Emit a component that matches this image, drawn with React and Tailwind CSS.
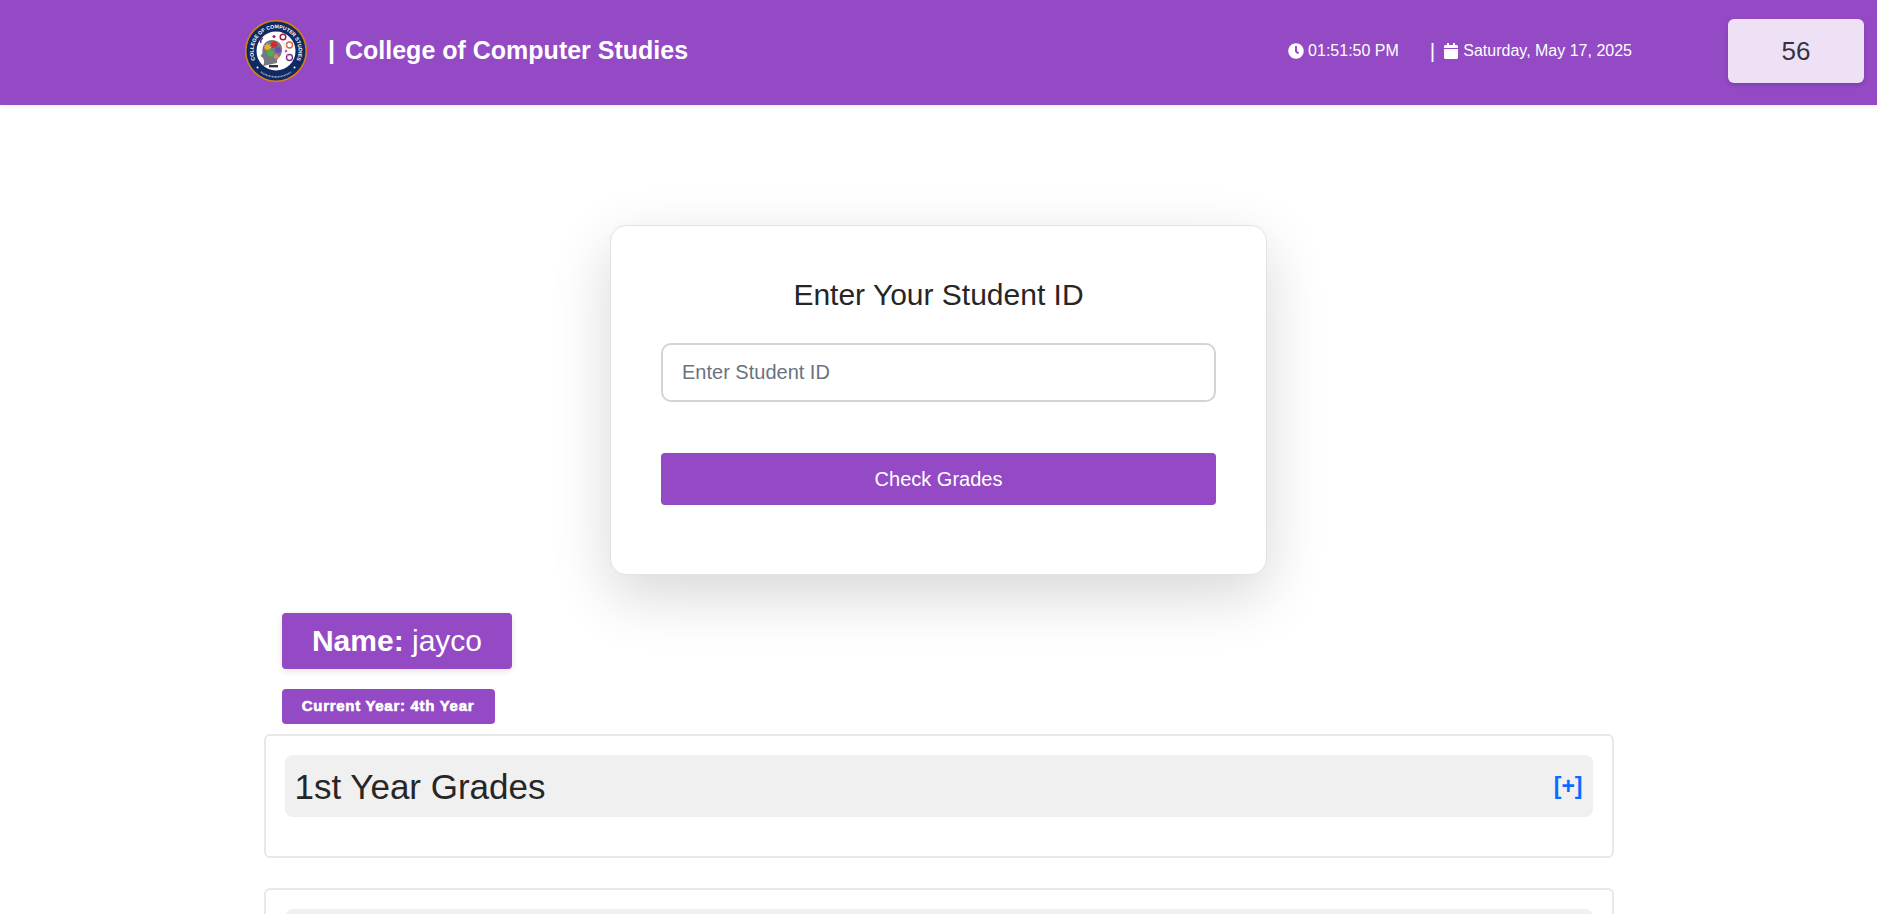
import { FaClock, FaCalendar } from 'react-icons/fa';

// round college seal, drawn small like the one in the header
function Logo() {
  return (
    <svg width="62" height="62" viewBox="0 0 62 62" className="shrink-0">
      <defs>
        <path id="sealTop" d="M14.3 46 A22.5 22.5 0 1 1 47.7 46" />
      </defs>
      <circle cx="31" cy="31" r="31" fill="#d9820f" />
      <circle cx="31" cy="31" r="29.5" fill="#0f2a63" />
      <circle cx="31" cy="31" r="19.5" fill="#ffffff" />
      <text fontSize="5.2" fontWeight="700" fill="#ffffff" fontFamily="Liberation Sans, sans-serif">
        <textPath href="#sealTop" startOffset="50%" textAnchor="middle">COLLEGE OF COMPUTER STUDIES</textPath>
      </text>
      <circle cx="12.5" cy="47.5" r="1" fill="#ffffff" />
      <circle cx="49.5" cy="47.5" r="1" fill="#ffffff" />
      {/* tiny line of text on the seal, too small to read */}
      <path d="M16 52 A25.5 25.5 0 0 0 46 52" fill="none" stroke="#aab6cf" strokeWidth="1.6" strokeDasharray="0.9 0.6" />
      {/* head */}
      <path d="M18 46 C20 42 19 40 18 38 L15.5 36 L17.5 33 C16.5 25 21 20 27 20 C34 20 38 25 37 31 C36 37 33 38 32 40 L32 43 L27 44 Z" fill="#77777f" />
      {/* gears */}
      <circle cx="22.5" cy="27" r="2.6" fill="#f2b01e" stroke="#f2b01e" strokeWidth="2" strokeDasharray="1.2 1" />
      <circle cx="29" cy="24.5" r="2.6" fill="#d9262c" stroke="#d9262c" strokeWidth="2" strokeDasharray="1.2 1" />
      <circle cx="25.5" cy="33" r="2.8" fill="#43b649" stroke="#43b649" strokeWidth="2" strokeDasharray="1.2 1" />
      <circle cx="33" cy="30" r="2.4" fill="#6a4fb3" stroke="#6a4fb3" strokeWidth="1.6" strokeDasharray="1.2 1" />
      <circle cx="31" cy="36.5" r="2" fill="#d98a5a" stroke="#d98a5a" strokeWidth="1.4" strokeDasharray="1.2 1" />
      {/* icons round the head */}
      <circle cx="29" cy="16.5" r="1.5" fill="#b01e4f" />
      <circle cx="38" cy="17" r="2.8" fill="none" stroke="#a3153f" strokeWidth="1.4" />
      <circle cx="44.5" cy="25" r="3" fill="none" stroke="#e0603a" strokeWidth="1.4" />
      <circle cx="44.5" cy="37.5" r="3" fill="none" stroke="#7b2d8e" strokeWidth="1.4" />
      <circle cx="41" cy="31" r="1.3" fill="#c23fa0" />
      <path d="M18 18 A4 4 0 0 0 16 23" fill="none" stroke="#7b2d8e" strokeWidth="1.6" />
      <path d="M37 23 L43 25 M37 31 L44 37 M37 20 L41 31" stroke="#e3c9d8" strokeWidth="0.5" />
      <rect x="24" y="45" width="9" height="2.4" fill="#333333" />
    </svg>
  );
}

function GradeCard({ title }) {
  return (
    <div className="bg-white border-2 border-[#e8e8e8] rounded-md p-[19px] pb-[39px]">
      <div className="flex items-center justify-between h-[62px] bg-[#f0f0f0] rounded-lg px-[10px]">
        {title && <h3 className="pt-0.5 text-[35px] text-[#262626]">{title}</h3>}
        {title && <span className="text-[23px] font-bold text-[#0a6cff]">[+]</span>}
      </div>
    </div>
  );
}

export default function App() {
  return (
    <div className="h-screen overflow-hidden bg-white font-['Liberation_Sans',Arial,sans-serif]">
      <header className="flex items-center h-[105px] pb-[3px] bg-[#934ac4] text-white pl-[245px] pr-[13px] shadow-[0_2px_4px_rgba(0,0,0,0.06)]">
        <Logo />
        <div className="flex items-center text-[25px] font-bold ml-[21px]">
          <span className="mr-[10px]">|</span>
          <span>College of Computer Studies</span>
        </div>
        <div className="flex items-center ml-auto text-base">
          <FaClock className="text-base" />
          <span className="ml-[4px]">01:51:50 PM</span>
          <span className="ml-[31px] text-[21px]">|</span>
          <FaCalendar className="ml-[8px] text-base" />
          <span className="ml-[4px]">Saturday, May 17, 2025</span>
        </div>
        <div className="flex items-center justify-center w-[136px] h-[64px] ml-[96px] bg-[#eee0f5] rounded-md text-[#333340] text-[26px] shadow-[0_2px_4px_rgba(0,0,0,0.15)]">
          56
        </div>
      </header>

      <main>
        <div className="flex flex-col w-[657px] h-[350px] mx-auto mt-[120px] px-[50px] pt-[51px] bg-white border border-[#e2e2e2] rounded-2xl shadow-[0_20px_60px_rgba(0,0,0,0.16)]">
          <h2 className="text-[30px] leading-[36px] text-center text-[#262626]">Enter Your Student ID</h2>
          <input
            type="text"
            placeholder="Enter Student ID"
            className="h-[59px] mt-[30px] pl-[19px] pr-5 text-xl border-2 border-[#d1d5db] rounded-[10px] outline-none placeholder:text-[#6b7280]"
          />
          <button className="h-[52px] mt-[51px] bg-[#934ac4] text-white text-xl rounded">Check Grades</button>
        </div>

        <section className="w-[1350px] mx-auto mt-[38px]">
          <div className="flex flex-col items-start ml-[18px]">
            <div className="flex items-center justify-center w-[230px] h-[56px] pb-[2px] pl-px bg-[#934ac4] text-white text-[30px] rounded shadow-[0_2px_6px_rgba(0,0,0,0.12)]">
              <b>Name:</b>&nbsp;jayco
            </div>
            <div className="flex items-center justify-center w-[213px] h-[35px] mt-5 bg-[#934ac4] text-white text-[15px] tracking-[0.7px] font-bold rounded [-webkit-text-stroke:0.6px_white]">
              Current Year: 4th Year
            </div>
          </div>
          <div className="flex flex-col gap-[30px] mt-[10px]">
            <GradeCard title="1st Year Grades" />
            <GradeCard />
          </div>
        </section>
      </main>
    </div>
  );
}
